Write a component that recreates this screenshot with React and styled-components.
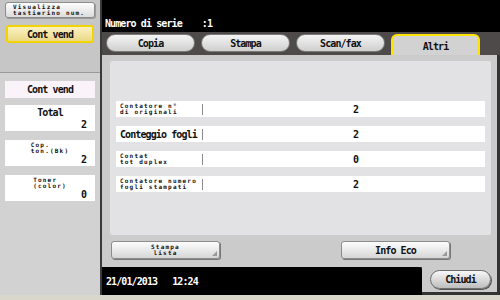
import React from 'react';
import styled, {createGlobalStyle} from 'styled-components';

const GlobalStyle = createGlobalStyle`
  html, body {
    margin:0;
    padding:0;
    background:#d9d6cc;
  }
  body{
    font-family:"DejaVu Sans Mono", "Liberation Mono", monospace;
    color:#111;
  }
`;

const tabs = ['Copia', 'Stampa', 'Scan/fax', 'Altri'];

const counters = [
  {label: ['Contatore n°', 'di originali'], value: '2'},
  {label: ['Conteggio fogli'], value: '2', big: true},
  {label: ['Contat', 'tot duplex'], value: '0'},
  {label: ['Contatore numero', 'fogli stampati'], value: '2'},
];

const sideCounters = [
  {label: ['Total'], value: '2', big: true},
  {label: ['Cop.', 'ton.(Bk)'], value: '2'},
  {label: ['Toner', '(color)'], value: '0'},
];

function Label({lines, big}) {
  if (big) return <BigText>{lines[0]}</BigText>;
  return (
    <SmallText>
      {lines.map((l, i) => <div key={i}>{l}</div>)}
    </SmallText>
  );
}

export default function App() {
  return (
    <Screen>
      <GlobalStyle/>
      <Body>
        <Side>
          <SideTop>
            <KeyButton>
              <SmallText>
                <div>Visualizza</div>
                <div>tastierino num.</div>
              </SmallText>
            </KeyButton>
            <YellowButton>Cont vend</YellowButton>
          </SideTop>
          <SideBottom>
            <PinkBox>Cont vend</PinkBox>
            {
              sideCounters.map((item, index) => (
                <SideCard key={index}>
                  <SideLabel>
                    <Label lines={item.label} big={item.big}/>
                  </SideLabel>
                  <SideValue>{item.value}</SideValue>
                </SideCard>
              ))
            }
          </SideBottom>
        </Side>
        <Main>
          <Header>
            <span>Numero di serie</span>
            <span>:1</span>
          </Header>
          <TabBar>
            {
              tabs.map((t, i) => (
                <Tab key={t} active={i === 3}>{t}</Tab>
              ))
            }
          </TabBar>
          <Frame>
            <Inner>
              {
                counters.map((item, index) => (
                  <Row key={index}>
                    <RowLabel>
                      <Label lines={item.label} big={item.big}/>
                    </RowLabel>
                    <RowValue>{item.value}</RowValue>
                  </Row>
                ))
              }
            </Inner>
            <ButtonRow>
              <ActionButton>
                <SmallText center>
                  <div>Stampa</div>
                  <div>lista</div>
                </SmallText>
              </ActionButton>
              <ActionButton>Info Eco</ActionButton>
            </ButtonRow>
          </Frame>
          <Footer>
            <StatusBar>
              <span>21/01/2013</span>
              <span>12:24</span>
            </StatusBar>
            <CloseCell>
              <CloseButton>Chiudi</CloseButton>
            </CloseCell>
          </Footer>
        </Main>
      </Body>
    </Screen>
  );
}

const Screen = styled.div`
  width:500px;
  height:300px;
  display:flex;
  flex-direction:column;
  overflow:hidden;
  background:#d9d6cc;
`;

const Body = styled.div`
  height:295px;
  display:flex;
`;

const BigText = styled.span`
  font-size:10px;
  font-weight:600;
  letter-spacing:-0.9px;
`;

const SmallText = styled.div`
  font-size:6px;
  line-height:6px;
  font-weight:bold;
  letter-spacing:1.2px;
  text-align:${props => props.center ? 'center' : 'left'};
`;

const Side = styled.div`
  width:100px;
  border-right:2px solid #3a3a3a;
  display:flex;
  flex-direction:column;
  background:#d2d2d2;
`;

const SideTop = styled.div`
  height:73px;
  background:#c6c6c6;
  border-bottom:1px solid #9a9a9a;
  padding:2px 5px 0 5px;
  box-sizing:border-box;
  display:flex;
  flex-direction:column;
  gap:7px;
`;

const KeyButton = styled.div`
  height:16px;
  box-sizing:border-box;
  border:1px solid #8c8c8c;
  border-radius:3px;
  background:linear-gradient(#fdfdfd, #dcdcdc);
  box-shadow:1px 1px 0 #9a9a9a;
  display:flex;
  align-items:center;
  padding-left:7px;
  letter-spacing:0.4px;
`;

const YellowButton = styled.div`
  height:18px;
  margin:0 1px;
  box-sizing:border-box;
  border:2px solid #f2d400;
  border-radius:3px;
  background:linear-gradient(#fbf2c0, #ead889);
  display:flex;
  align-items:center;
  justify-content:center;
  font-size:10px;
  font-weight:600;
  letter-spacing:-0.9px;
`;

const SideBottom = styled.div`
  padding:8px 5px 0 5px;
  display:flex;
  flex-direction:column;
  gap:9px;
`;

const PinkBox = styled.div`
  height:17px;
  background:#fbf3fa;
  display:flex;
  align-items:center;
  justify-content:center;
  font-size:10px;
  font-weight:600;
  letter-spacing:-0.9px;
  margin-bottom:-2px;
`;

const SideCard = styled.div`
  height:26px;
  background:#fff;
  display:flex;
  flex-direction:column;
  padding:2px 8px 0 8px;
  box-sizing:border-box;
`;

const SideLabel = styled.div`
  height:12px;
  display:flex;
  justify-content:center;
`;

const SideValue = styled.div`
  text-align:right;
  font-size:10px;
  font-weight:600;
  line-height:12px;
`;

const Main = styled.div`
  flex:1;
  display:flex;
  flex-direction:column;
  background:#333;
`;

const Header = styled.div`
  height:32px;
  background:#000;
  color:#fff;
  display:flex;
  align-items:flex-end;
  gap:20px;
  padding:0 0 3px 3px;
  box-sizing:border-box;
  font-size:10px;
  font-weight:600;
  letter-spacing:-0.9px;
`;

const TabBar = styled.div`
  height:23px;
  background:#4e4a4a;
  display:flex;
  align-items:flex-end;
  gap:6px;
  padding-left:4px;
  box-sizing:border-box;
`;

const Tab = styled.div`
  width:89px;
  box-sizing:border-box;
  display:flex;
  align-items:center;
  justify-content:center;
  font-size:10px;
  font-weight:600;
  letter-spacing:-0.9px;
  height:${props => props.active ? '21px' : '18px'};
  margin-bottom:${props => props.active ? '0' : '3px'};
  border-radius:${props => props.active ? '6px 6px 0 0' : '9px'};
  border:${props => props.active ? '2px solid #ffe300' : '1px solid #7a7a7a'};
  border-bottom:${props => props.active ? 'none' : '1px solid #7a7a7a'};
  background:${props => props.active ? '#d2d2d2' : 'linear-gradient(#f4f4f4, #cfcfcf)'};
  padding-top:${props => props.active ? '2px' : '0'};
`;

const Frame = styled.div`
  height:212px;
  margin-right:3px;
  background:#cbcbcb;
  padding:6px 6px 0 8px;
  box-sizing:border-box;
  display:flex;
  flex-direction:column;
`;

const Inner = styled.div`
  height:174px;
  background:#e2e1e3;
  border-radius:2px;
  padding:40px 6px 0 6px;
  box-sizing:border-box;
  display:flex;
  flex-direction:column;
  gap:9px;
`;

const Row = styled.div`
  height:16px;
  background:#fff;
  display:flex;
  align-items:center;
`;

const RowLabel = styled.div`
  width:87px;
  height:11px;
  padding-left:4px;
  box-sizing:border-box;
  border-right:1px solid #8a8a8a;
  display:flex;
  align-items:center;
  white-space:nowrap;
`;

const RowValue = styled.div`
  flex:1;
  text-align:center;
  padding-left:24px;
  font-size:10px;
  font-weight:600;
`;

const ButtonRow = styled.div`
  display:flex;
  gap:121px;
  margin-top:6px;
  padding-left:1px;
`;

const ActionButton = styled.div`
  position:relative;
  width:109px;
  height:18px;
  box-sizing:border-box;
  border:1px solid #8c8c8c;
  border-radius:3px;
  background:linear-gradient(#fdfdfd, #d6d6d6);
  box-shadow:1px 1px 0 #777;
  display:flex;
  align-items:center;
  justify-content:center;
  font-size:10px;
  font-weight:600;
  letter-spacing:-0.9px;
  &::after{
    content:'';
    position:absolute;
    right:2px;
    bottom:2px;
    border-left:5px solid transparent;
    border-bottom:5px solid #9a9a9a;
  }
`;

const Footer = styled.div`
  flex:1;
  display:flex;
`;

const StatusBar = styled.div`
  width:320px;
  background:#000;
  color:#fff;
  border-top-right-radius:4px;
  display:flex;
  align-items:center;
  gap:15px;
  padding:1px 0 0 4px;
  box-sizing:border-box;
  font-size:10px;
  font-weight:600;
  letter-spacing:-0.9px;
`;

const CloseCell = styled.div`
  width:75px;
  height:25px;
  background:#cbcbcb;
  display:flex;
  align-items:center;
  justify-content:center;
  padding-left:2px;
  box-sizing:border-box;
`;

const CloseButton = styled.div`
  width:61px;
  height:19px;
  box-sizing:border-box;
  border:1px solid #6e6e6e;
  border-radius:10px;
  background:linear-gradient(#f8f8f8, #bdbdbd);
  box-shadow:1px 1px 0 #555;
  display:flex;
  align-items:center;
  justify-content:center;
  font-size:10px;
  font-weight:600;
  letter-spacing:-0.9px;
`;
